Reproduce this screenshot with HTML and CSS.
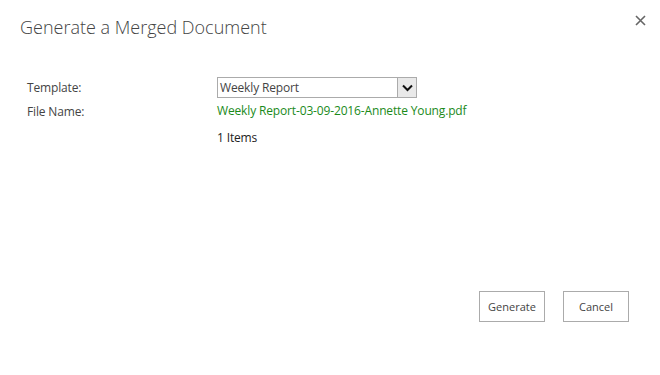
FILE: index.html
```html
<!DOCTYPE html>
<html>
<head>
  <meta charset="utf-8">
  <link rel="stylesheet" href="styles.css">
</head>
<body>
  <div class="dialog">
    <div class="dlg-header">
      <h1 class="dlg-title">Generate a Merged Document</h1>
      <button class="close-btn" title="Close">
        <svg width="11" height="11" viewBox="0 0 11 11">
          <path d="M1 1 L10 10 M10 1 L1 10" stroke="#666" stroke-width="1.6" fill="none"/>
        </svg>
      </button>
    </div>

    <div class="form">
      <div class="form-row">
        <div class="form-label">Template:</div>
        <div class="form-value">
          <div class="select">
            <span class="select-text">Weekly Report</span>
            <span class="select-arrow">
              <svg width="11" height="8" viewBox="0 0 11 8">
                <path d="M1 1.5 L5.5 6 L10 1.5" stroke="#111" stroke-width="2" fill="none"/>
              </svg>
            </span>
          </div>
        </div>
      </div>
      <div class="form-row">
        <div class="form-label">File Name:</div>
        <div class="form-value file-name">Weekly Report-03-09-2016-Annette Young.pdf</div>
      </div>
      <div class="form-row">
        <div class="form-label"></div>
        <div class="form-value item-count">1 Items</div>
      </div>
    </div>

    <div class="actions">
      <button class="dlg-btn">Generate</button>
      <button class="dlg-btn">Cancel</button>
    </div>
  </div>
</body>
</html>
```

FILE: styles.css
```css
body {
  margin: 0;
  background-color: #fff;
  font-family: "Open Sans", "Noto Sans", sans-serif;
  color: #444;
}

.dialog {
  width: 660px;
  height: 375px;
  position: relative;
}

.dlg-header {
  display: flex;
  justify-content: space-between;
  align-items: flex-start;
  padding: 14px 14px 0 20px;
}

.dlg-title {
  margin: 0;
  font-size: 18px;
  font-weight: 300;
  color: #444;
  line-height: 26px;
}

.close-btn {
  border: none;
  background: none;
  padding: 0;
  margin-top: 1px;
  width: 11px;
  height: 11px;
  cursor: pointer;
}

.close-btn svg {
  display: block;
}

.form {
  padding: 37px 0 0 27px;
  font-size: 12px;
  letter-spacing: -0.15px;
}

.form-row {
  display: grid;
  grid-template-columns: 190px 1fr;
  align-items: center;
}

.form-row + .form-row {
  margin-top: 3px;
}

.form-label {
  color: #444;
}

.select {
  width: 198px;
  height: 19px;
  border: 1px solid #ababab;
  display: flex;
  align-items: center;
  justify-content: space-between;
  color: #444;
  font-size: 12px;
}

.select-text {
  padding-left: 2px;
}

.select-arrow {
  width: 18px;
  height: 19px;
  background-color: #e9e9e9;
  border-left: 1px solid #ababab;
  display: flex;
  align-items: center;
  justify-content: center;
}

.file-name {
  color: #1a8a1a;
  line-height: 20px;
}

.item-count {
  color: #222;
  line-height: 20px;
  margin-top: 4px;
}

.actions {
  position: absolute;
  right: 31px;
  top: 291px;
  display: flex;
  gap: 18px;
}

.dlg-btn {
  width: 66px;
  height: 31px;
  border: 1px solid #ababab;
  background-color: #fff;
  font-family: "Open Sans", "Noto Sans", sans-serif;
  font-size: 11px;
  color: #444;
  padding: 0;
}
```
